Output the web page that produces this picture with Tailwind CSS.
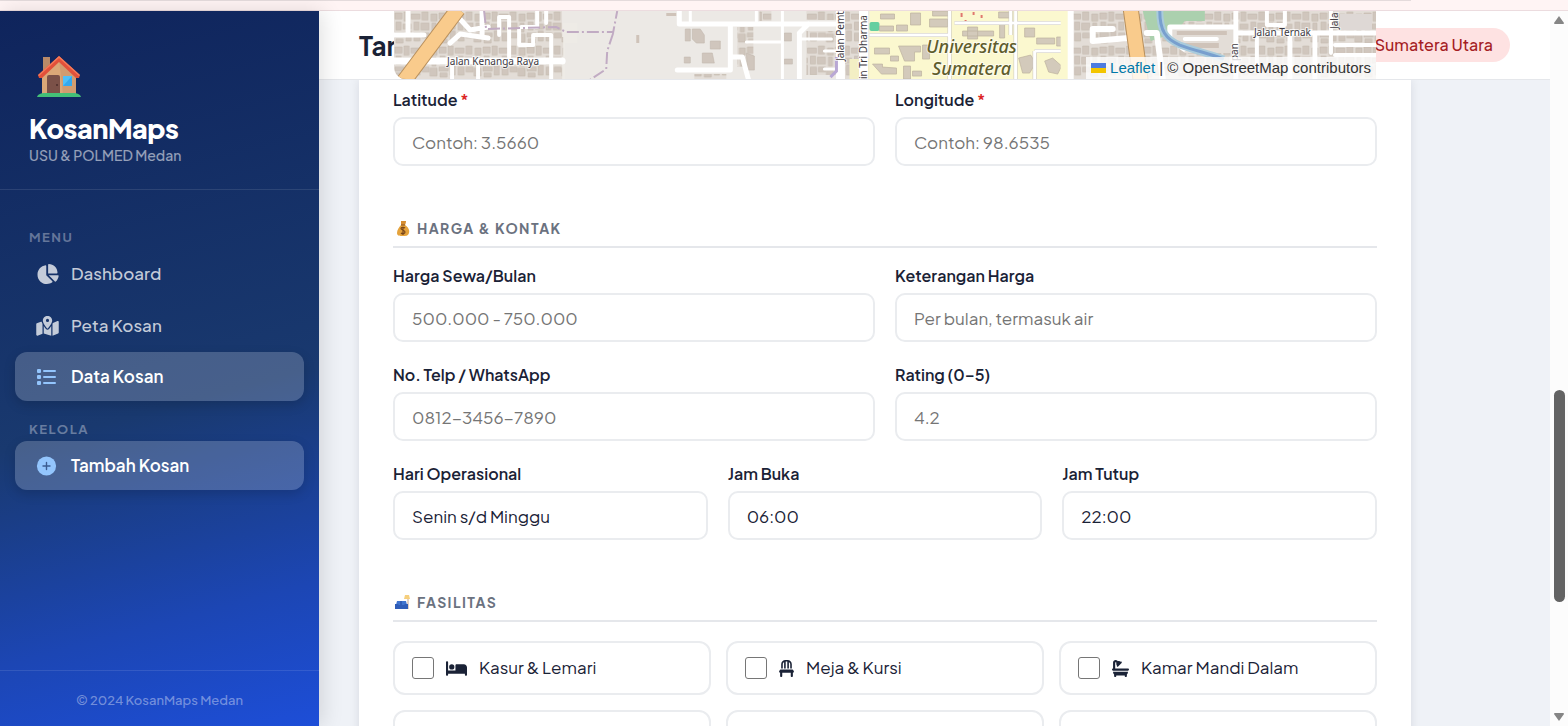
<!DOCTYPE html>
<html lang="id">
<head>
    <meta charset="UTF-8">
    <meta name="viewport" content="width=device-width, initial-scale=1.0">
    <title>KosanMaps - Tambah Kosan</title>
    <script src="https://cdn.jsdelivr.net/npm/@tailwindcss/browser@4"></script>
</head>
<body class="h-screen overflow-hidden flex flex-col bg-[#eff2f7] text-[#1a2236] font-['Plus_Jakarta_Sans',Inter,sans-serif]">
    <!-- Browser edge -->
    <div class="h-[11px] shrink-0 bg-[#fff4f4] border-b border-[#ecdcdf]">
        <div class="h-px w-[90%] bg-[#e4dbdc]"></div>
    </div>

    <div class="flex flex-1 min-h-0">
        <!-- Sidebar -->
        <aside class="relative z-20 w-[319px] shrink-0 flex flex-col text-white bg-[linear-gradient(165deg,#0f245c_0%,#19396f_55%,#1c46b4_82%,#1d4ed8_100%)] shadow-[4px_0_20px_rgba(0,0,0,0.12)]">
            <div class="px-[29px] pt-11 pb-[23px] border-b border-white/10">
                <svg class="ml-2 size-11" viewBox="0 0 44 44" aria-hidden="true">
                    <rect x="6" y="2" width="7" height="18" fill="#b98a68"/>
                    <path d="M5 19 22 4l17 15v21H5z" fill="#dba878"/>
                    <path d="M22 4l17 15v21H26z" fill="#d19c70"/>
                    <path d="M22 1 1 20l1 3h3L22 7l17 16h3l1-3z" fill="#e2503a"/>
                    <path d="M22 1 1 20l1 1L22 3l20 18 1-1z" fill="#f47a58"/>
                    <rect x="10" y="20" width="13" height="20" rx="2" fill="#7b5148"/>
                    <circle cx="20" cy="30" r="1" fill="#4b2d2a"/>
                    <rect x="26" y="21" width="9" height="10" fill="#35a8ee"/>
                    <path d="M26 31V21h9z" fill="#4fc0f8"/>
                    <path d="M0 42c1-3 4-4 8-4h28c4 0 7 1 8 4z" fill="#43c078"/>
                </svg>
                <h1 class="mt-[13px] text-[27px] leading-8 font-extrabold tracking-[-0.5px]">KosanMaps</h1>
                <p class="text-[14px] leading-[22px] font-medium text-white/55">USU &amp; POLMED Medan</p>
            </div>

            <nav class="flex-1 px-[15px] pt-[34px] text-[17px] font-medium">
                <p class="pl-[14px] pt-px leading-6 text-[13px] font-bold tracking-[1.5px] text-white/35">MENU</p>
                <a href="#" class="mb-[3px] h-[49px] px-[21px] flex items-center gap-3 rounded-xl text-white/75">
                    <svg class="w-[23px] h-5" viewBox="0 0 576 512" fill="currentColor"><path d="M304 240V16.6c0-9 7-16.6 16-16.6C443.7 0 544 100.3 544 224c0 9-7.6 16-16.6 16H304zM32 272C32 150.7 122.1 50.3 239 34.3c9.2-1.3 17 6.1 17 15.4V288L412.5 444.5c6.7 6.7 6.2 17.7-1.5 23.1C371.8 495.6 323.8 512 272 512C139.5 512 32 404.6 32 272zm526.4 16c9.3 0 16.6 7.8 15.4 17c-7.7 55.9-34.6 105.6-73.9 142.3c-6 5.6-15.4 5.2-21.2-.7L320 288H558.4z"/></svg>
                    Dashboard
                </a>
                <a href="#" class="mb-[2px] h-[49px] px-[21px] flex items-center gap-3 rounded-xl text-white/75">
                    <svg class="w-[23px] h-5" viewBox="0 0 576 512" fill="currentColor"><path d="M408 120c0 54.6-73.1 151.9-105.2 192c-7.7 9.6-22 9.6-29.6 0C241.1 271.9 168 174.6 168 120C168 53.7 221.7 0 288 0s120 53.7 120 120zm8 80.4c3.5-6.9 6.7-13.8 9.6-20.6c.5-1.2 1-2.5 1.5-3.7l116-46.4C558.9 123.4 576 135 576 152V422.8c0 9.8-6 18.6-15.1 22.3L416 503V200.4zM137.6 138.3c2.4 14.1 7.2 28.3 12.8 41.5c2.9 6.8 6.1 13.7 9.6 20.6V451.8L32.9 502.7C17.1 509 0 497.4 0 480.4V209.6c0-9.8 6-18.6 15.1-22.3l122.6-49zM327.8 332c13.9-17.4 35.7-45.7 56.2-77V504.3L192 449.4V255c20.5 31.3 42.3 59.6 56.2 77c20.5 25.6 59.1 25.6 79.6 0zM288 152a40 40 0 1 0 0-80 40 40 0 1 0 0 80z"/></svg>
                    Peta Kosan
                </a>
                <a href="#" class="h-[49px] px-[21px] flex items-center gap-3 rounded-xl bg-white/20 font-semibold shadow-[0_4px_12px_rgba(0,0,0,0.15)]">
                    <svg class="w-[23px] h-5 text-[#93c5fd]" viewBox="0 0 23 20" fill="currentColor"><rect x="1" y="2" width="4" height="4" rx="1"/><rect x="1" y="8" width="4" height="4" rx="1"/><rect x="1" y="14" width="4" height="4" rx="1"/><rect x="7" y="3" width="13" height="2" rx="1"/><rect x="7" y="9" width="13" height="2" rx="1"/><rect x="7" y="15" width="13" height="2" rx="1"/></svg>
                    Data Kosan
                </a>
                <p class="pl-[14px] pt-4 leading-6 text-[13px] font-bold tracking-[1.5px] text-white/35">KELOLA</p>
                <a href="#" class="h-[49px] px-[21px] flex items-center gap-3 rounded-xl bg-white/20 font-semibold shadow-[0_4px_12px_rgba(0,0,0,0.15)]">
                    <svg class="w-[23px] h-5" viewBox="0 0 23 20"><circle cx="10.500" cy="10" r="9.600" fill="#93c5fd"/><path d="M10.500 6.500v7M7 10h7" stroke="#3b5b90" stroke-width="1.400" stroke-linecap="round"/></svg>
                    Tambah Kosan
                </a>
            </nav>

            <p class="h-14 flex items-center justify-center pt-1 border-t border-white/10 text-[13px] font-medium text-white/40">© 2024 KosanMaps Medan</p>
        </aside>

        <main class="flex-1 min-w-0 overflow-hidden">
            <header class="relative z-[5] h-[69px] px-10 flex items-center justify-between bg-white border-b border-[#e5e7eb]">
                <h2 class="text-[26px] font-bold">Tambah Kosan</h2>
                <span class="h-[34px] px-[17px] flex items-center rounded-full bg-[#fee2e2] text-[16px] font-medium text-[#a51d24]">Medan, Sumatera Utara</span>
            </header>

            <form class="flow-root mx-10 max-w-[1052px] px-[34px] pb-8 bg-white shadow-[0_0_10px_rgba(15,23,42,0.1)]">
                <div class="relative z-10 -mt-[69px] h-[68px] mx-px overflow-hidden rounded-bl-xl bg-[#eeebe6]">
                    <svg class="size-full" viewBox="0 0 981 68" preserveAspectRatio="xMinYMin slice">
                        <defs>
                            <pattern id="houses" width="44" height="34" patternUnits="userSpaceOnUse">
                                <rect width="44" height="34" fill="#e3ddd7"/>
                                <path d="M1 2h7v6H1zM10 1h5v9h-5zM17 3h9v5h-9zM28 1h6v8h-6zM37 3h6v7h-6zM2 11h5v8H2zM9 13h8v5H9zM20 11h5v8h-5zM27 12h8v7h-8zM38 12h4v9h-4zM1 22h9v4H1zM12 20h5v10h-5zM20 22h6v8h-6zM28 22h7v5h-7zM36 23h7v8h-7zM2 28h7v4H2z" fill="#d0c6bd" stroke="#c3b8ae" stroke-width=".6"/>
                            </pattern>
                        </defs>

                        <!-- Kenanga Raya -->
                        <path d="M0 0h168v68H0z" fill="url(#houses)"/>
                        <path d="M96 0h72v12h15v20h-12v36h330V0z" fill="#ece9e5"/>
                        <path d="M94 26h75v20H94zM120 0h25v13h-25zM100 56h50v12h-50zM153 6h11v18h-11z" fill="url(#houses)"/>
                        <g fill="none" stroke="#fff" stroke-linejoin="round" stroke-linecap="round">
                            <path d="M0 50h168" stroke-width="7"/>
                            <path d="M0 24h30M14 0v22M64 6l12 13 18-3M56 32l10-9 28 4M88 0v26" stroke-width="5"/>
                            <path d="M105 24V6h10v40M58 52v16M84 54v14M125 18v16h14V24h18v44M143 0v16h-16M152 0v12" stroke-width="4"/>
                        </g>
                        <path d="M64-2 10 70" stroke="#b88f5c" stroke-width="16" fill="none"/>
                        <path d="M64-2 10 70" stroke="#f9cb8c" stroke-width="14" fill="none"/>
                        <path d="M90 0l2 18 70-2 10 5h47l4-21M219 22l-6 18-1 18-18 12" fill="none" stroke="#c1abc3" stroke-width="2" stroke-dasharray="12 3 2 3"/>
                        <path d="M242 24h3v8h-3zM272 2h10v3h-10z" fill="#cfc3b9"/>

                        <!-- West of Tri Dharma -->
                        <path d="M343 16h16v40h-16zM412 20h30v44h-30zM300 63h32v5h-32zM365 0h12v10h-12zM412 0h43v9h-43z" fill="url(#houses)"/>
                        <path d="M298 18h8l4 6v8h-8l-4-4zM308 42h10l2 10h-12zM291 18h5v12h-5zM316 30h10v8h-10zM290 46h6v6h-6zM390 22h7v8h-7zM390 48h8v5h-8zM352 42l8 3v14h-7z" fill="#d0c6bd" stroke="#c3b8ae" stroke-width=".6"/>
                        <path d="M448 0h24v68h-24z" fill="url(#houses)"/>
                        <path d="M455 48h20v20h-20z" fill="#f3efc4"/>
                        <g fill="none" stroke="#fff" stroke-linejoin="round" stroke-linecap="round">
                            <path d="M285 0v13h158M336 13v33h12l6 22M283 59h53V46M405 22v46M405 22l9-9" stroke-width="5"/>
                            <path d="M388 0v68M352 31h36M405 28h32M362 0v12M430 40h12M430 58h12M296 0v12" stroke-width="3"/>
                            <path d="M446 0v68M469 0v68" stroke-width="9"/>
                        </g>
                        <path d="M442 46v14l-6 6" stroke="#b9a8d4" stroke-width="3" fill="none"/>

                        <!-- Campus -->
                        <path d="M475 0h200v68H475z" fill="#fbf8cf"/>
                        <rect x="475" y="11" width="10" height="9" rx="2" fill="#65cfa0"/>
                        <g fill="#d3cabb" stroke="#bdb19f" stroke-width=".7">
                            <path d="M486 3h14v5h-14zM485 15h14v5h-14zM502 14h11v6h-11zM516 2h10v12h-10zM535 8h18v8h-18zM538 0h16v5h-16z"/>
                            <path d="M480 37h15v6h-15zM504 35h22v6h-6v9h-10zM528 34h7v14h-7zM496 45h8v5h-8zM478 53h10v3l14 1v6h-15zM509 55h7v13h-7zM518 60h9v5h-9z"/>
                            <path d="M568 20h31v5h-31zM573 16h10v12h-10zM604 1h12v6h-12zM605 13h5v14h-5zM630 17h10v9h-10zM642 27h18v6h-18zM662 26h9v9h-9zM624 47l12-3 5 8-6 10h-7zM650 50l8-3 9 8-4 8-9-2z"/>
                        </g>
                        <path d="M567 2v4m4 3v2m8-10v3m8 0v3m-6 4v1" stroke="#e0776f" stroke-width="2"/>
                        <g fill="none" stroke="#c9c4bd" stroke-width="4"><path d="M475 24h80v-24M555 24v44M560 12h110M616 0v24M621 0v68M640 40h35v28M640 40v28"/></g>
                        <g fill="none" stroke="#fff" stroke-width="3"><path d="M475 24h80v-24M555 24v44M560 12h110M616 0v24M621 0v68M640 40h35v28M640 40v28"/></g>

                        <!-- East of campus -->
                        <path d="M675 0h306v68H675z" fill="url(#houses)"/>
                        <path d="M672 4h6v8h-6zM666 0h9v68h-9z" fill="#fbf8cf"/>
                        <path d="M748 0h62v10h-20l-10 12-24 8z" fill="#abd0ae"/>
                        <path d="M776 16h64v26h-50l-14-12z" fill="#e3ddd7"/>
                        <path d="M782 20h50v4h-50zM790 32h34v5h-34z" fill="#cfc3b9"/>
                        <path d="M945 3h32v16h-32z" fill="#ded8d5"/>
                        <g fill="none" stroke="#fff" stroke-linejoin="round" stroke-linecap="round">
                            <path d="M676 0v68M698 18v12l36-3M698 18h20M752 22h10l6 46" stroke-width="6"/>
                            <path d="M775 16h66M841 0v68M775 16v12l14 10M841 22h140M895 24v44M920 24v44" stroke-width="5"/>
                            <path d="M872 0v14h18V0M862 24v36M936 0v42M940 34h41M940 44h41M790 28h32" stroke-width="4"/>
                        </g>
                        <path d="M765 0c0 20 6 28 20 34 16 6 28 8 44 14" fill="none" stroke="#a9cbdc" stroke-width="7"/>
                        <path d="M765 0c0 20 6 28 20 34 16 6 28 8 44 14" fill="none" stroke="#789fce" stroke-width="3"/>
                        <path d="M736-2l10 72" stroke="#b88f5c" stroke-width="16" fill="none"/>
                        <path d="M736-2l10 72" stroke="#f9cb8c" stroke-width="14" fill="none"/>

                        <g font-family="Noto Sans, sans-serif" paint-order="stroke" stroke="#fff" stroke-opacity=".7" stroke-width="2" fill="#3d393f" font-size="10">
                            <text x="53" y="54">Jalan Kenanga Raya</text>
                            <text x="859" y="25">Jalan Ternak</text>
                            <text transform="translate(450 50) rotate(-90)">Jalan Pemt</text>
                            <text transform="translate(473 68) rotate(-90)">in Tri Dharma</text>
                            <text transform="translate(943 18) rotate(-90)">Jala</text>
                            <text transform="translate(843 50) rotate(-90)">pan</text>
                        </g>
                        <g font-family="Noto Sans, sans-serif" paint-order="stroke" stroke="#fff" stroke-opacity=".6" stroke-width="2" fill="#5f5d2c" font-size="18" font-style="italic" font-weight="500" text-anchor="middle">
                            <text x="577" y="42">Universitas</text>
                            <text x="577" y="64">Sumatera</text>
                        </g>
                    </svg>
                    <div class="absolute right-0 bottom-0 h-[22px] px-[5px] flex items-center gap-1 whitespace-nowrap bg-white/80 font-['Liberation_Sans',Arial,sans-serif] text-[15px] text-[#333]">
                        <svg class="w-[15px] h-[10px]" viewBox="0 0 15 10"><path fill="#4c7be1" d="M0 0h15v5H0z"/><path fill="#f3c500" d="M0 5h15v5H0z"/></svg>
                        <span><a href="#" class="text-[#0078a8]">Leaflet</a> | © OpenStreetMap contributors</span>
                    </div>
                </div>

                <div class="grid grid-cols-2 gap-5 pt-2 text-[17px]">
                    <div>
                        <label for="latitude" class="block mb-1 text-[16px] leading-[26px] font-semibold">Latitude <span class="text-[#dc2626]">*</span></label>
                        <input id="latitude" type="text" placeholder="Contoh: 3.5660" class="w-full h-[49px] px-[17px] rounded-[10px] border-2 border-[#eaecef] placeholder:text-[#757575]">
                    </div>
                    <div>
                        <label for="longitude" class="block mb-1 text-[16px] leading-[26px] font-semibold">Longitude <span class="text-[#dc2626]">*</span></label>
                        <input id="longitude" type="text" placeholder="Contoh: 98.6535" class="w-full h-[49px] px-[17px] rounded-[10px] border-2 border-[#eaecef] placeholder:text-[#757575]">
                    </div>
                </div>

                <h3 class="mt-[50px] mb-[15px] pb-1.5 flex items-center gap-1.5 border-b-2 border-[#e5e7eb] text-[14px] leading-6 font-bold tracking-widest text-[#6b7280]">
                    <svg class="ml-0.5 size-4" viewBox="0 0 16 16" aria-hidden="true"><path d="M6 1h5L10 5c3 2 5 5 4 8s-3 3-6 3-6 0-6-3 2-6 4-8z" fill="#e5a33c"/><path d="M6 1h5l-1 4H6z" fill="#d68d31"/><path d="M6 5h4" stroke="#8c5524"/><path d="M10 8c-1-1-4-1-4 .5S10 10 10 12s-3 2-4 1M8 7v8" stroke="#79461b" stroke-width="1.200" fill="none"/></svg>
                    HARGA &amp; KONTAK
                </h3>

                <div class="grid grid-cols-2 gap-5 text-[17px]">
                    <div>
                        <label for="harga" class="block mb-1 text-[16px] leading-[26px] font-semibold">Harga Sewa/Bulan</label>
                        <input id="harga" type="text" placeholder="500.000 - 750.000" class="w-full h-[49px] px-[17px] rounded-[10px] border-2 border-[#eaecef] placeholder:text-[#757575]">
                    </div>
                    <div>
                        <label for="keterangan" class="block mb-1 text-[16px] leading-[26px] font-semibold">Keterangan Harga</label>
                        <input id="keterangan" type="text" placeholder="Per bulan, termasuk air" class="w-full h-[49px] px-[17px] rounded-[10px] border-2 border-[#eaecef] placeholder:text-[#757575]">
                    </div>
                    <div>
                        <label for="telp" class="block mb-1 text-[16px] leading-[26px] font-semibold">No. Telp / WhatsApp</label>
                        <input id="telp" type="text" placeholder="0812-3456-7890" class="w-full h-[49px] px-[17px] rounded-[10px] border-2 border-[#eaecef] placeholder:text-[#757575]">
                    </div>
                    <div>
                        <label for="rating" class="block mb-1 text-[16px] leading-[26px] font-semibold">Rating (0–5)</label>
                        <input id="rating" type="text" placeholder="4.2" class="w-full h-[49px] px-[17px] rounded-[10px] border-2 border-[#eaecef] placeholder:text-[#757575]">
                    </div>
                </div>

                <div class="mt-5 grid grid-cols-3 gap-5 text-[17px]">
                    <div>
                        <label for="hari" class="block mb-1 text-[16px] leading-[26px] font-semibold">Hari Operasional</label>
                        <input id="hari" type="text" value="Senin s/d Minggu" class="w-full h-[49px] px-[17px] rounded-[10px] border-2 border-[#eaecef]">
                    </div>
                    <div>
                        <label for="buka" class="block mb-1 text-[16px] leading-[26px] font-semibold">Jam Buka</label>
                        <input id="buka" type="text" value="06:00" class="w-full h-[49px] px-[17px] rounded-[10px] border-2 border-[#eaecef]">
                    </div>
                    <div>
                        <label for="tutup" class="block mb-1 text-[16px] leading-[26px] font-semibold">Jam Tutup</label>
                        <input id="tutup" type="text" value="22:00" class="w-full h-[49px] px-[17px] rounded-[10px] border-2 border-[#eaecef]">
                    </div>
                </div>

                <h3 class="mt-[50px] mb-[15px] pb-1.5 flex items-center gap-1.5 border-b-2 border-[#e5e7eb] text-[14px] leading-6 font-bold tracking-widest text-[#6b7280]">
                    <svg class="ml-0.5 size-4" viewBox="0 0 16 16" aria-hidden="true"><path d="M13 15V3" stroke="#c9a58a"/><path d="M9 5l1-4h4l1 4z" fill="#f6cf7d"/><path d="M2 7h9l1 4H1z" fill="#3f74cf"/><path d="M0 10h3l1 1h5l1-1h3v5H0z" fill="#2f5db8"/><path d="M6 7v4" stroke="#2449a0"/></svg>
                    FASILITAS
                </h3>

                <div class="pt-1 grid grid-cols-3 auto-rows-[54px] gap-[15px] text-[17px]">
                    <label class="px-[17px] flex items-center gap-3 rounded-xl border-2 border-[#eaecef]">
                        <input type="checkbox" class="size-[22px] appearance-none rounded-[3px] border border-[#767676] bg-white">
                        <svg class="w-[21px] h-[17px]" viewBox="0 0 640 512" fill="currentColor"><path d="M32 32c17.700 0 32 14.300 32 32V320H288V160c0-17.700 14.300-32 32-32H544c53 0 96 43 96 96V448c0 17.700-14.300 32-32 32s-32-14.300-32-32V416H64v32c0 17.700-14.300 32-32 32s-32-14.300-32-32V64C0 46.300 14.300 32 32 32zm144 96a80 80 0 1 1 0 160 80 80 0 1 1 0-160z"/></svg>
                        Kasur &amp; Lemari
                    </label>
                    <label class="px-[17px] flex items-center gap-3 rounded-xl border-2 border-[#eaecef]">
                        <input type="checkbox" class="size-[22px] appearance-none rounded-[3px] border border-[#767676] bg-white">
                        <svg class="w-[15px] h-[17px]" viewBox="0 0 448 512" fill="currentColor"><path d="M248 48V256h48V58.700c23.900 13.800 40 39.700 40 69.300V256h48V128C384 57.300 326.700 0 256 0H192C121.300 0 64 57.300 64 128V256h48V128c0-29.600 16.100-55.500 40-69.300V256h48V48h48zM48 288c-12.100 0-23.200 6.800-28.600 17.700l-16 32c-5 9.900-4.400 21.700 1.400 31.100S20.900 384 32 384l0 96c0 17.700 14.300 32 32 32s32-14.300 32-32V384H352v96c0 17.700 14.300 32 32 32s32-14.300 32-32V384c11.100 0 21.400-5.700 27.200-15.200s6.400-21.200 1.400-31.100l-16-32C423.200 294.800 412.100 288 400 288H48z"/></svg>
                        Meja &amp; Kursi
                    </label>
                    <label class="px-[17px] flex items-center gap-3 rounded-xl border-2 border-[#eaecef]">
                        <input type="checkbox" class="size-[22px] appearance-none rounded-[3px] border border-[#767676] bg-white">
                        <svg class="size-[17px]" viewBox="0 0 512 512" fill="currentColor"><path d="M96 77.300c0-7.300 5.900-13.300 13.300-13.300c3.500 0 6.900 1.400 9.400 3.900l14.900 14.900C130 91.800 128 101.700 128 112c0 19.900 7.200 38 19.200 52c-5.300 9.200-4 21.100 3.800 29c9.400 9.400 24.600 9.400 33.900 0L289 89c9.400-9.400 9.400-24.600 0-33.900c-7.900-7.900-19.800-9.100-29-3.800C246 39.200 227.900 32 208 32c-10.300 0-20.200 2-29.200 5.500L163.900 22.600C149.400 8.100 129.700 0 109.300 0C66.600 0 32 34.600 32 77.300V256c-17.700 0-32 14.300-32 32s14.300 32 32 32H480c17.700 0 32-14.300 32-32s-14.300-32-32-32H96V77.300zM32 352v16c0 28.400 12.400 54 32 71.600V480c0 17.700 14.300 32 32 32s32-14.300 32-32V464H384v16c0 17.700 14.300 32 32 32s32-14.300 32-32V439.600c19.600-17.600 32-43.100 32-71.600V352H32z"/></svg>
                        Kamar Mandi Dalam
                    </label>
                    <div class="rounded-xl border-2 border-[#eaecef]"></div>
                    <div class="rounded-xl border-2 border-[#eaecef]"></div>
                    <div class="rounded-xl border-2 border-[#eaecef]"></div>
                </div>
            </form>
        </main>

        <!-- Scrollbar -->
        <div class="w-[18px] shrink-0 py-1 flex flex-col items-center bg-[#fcfcfc]" aria-hidden="true">
            <svg class="w-3 h-[10px]" viewBox="0 0 12 10"><path d="M6 1l5 7q0 1-1 1H2Q1 9 1 8z" fill="#858585"/></svg>
            <div class="flex-[366]"></div>
            <div class="w-[11px] flex-[212] rounded-full bg-[#636363]"></div>
            <div class="flex-[110]"></div>
            <svg class="w-3 h-[10px]" viewBox="0 0 12 10"><path d="M6 9L1 2q0-1 1-1h8q1 0 1 1z" fill="#858585"/></svg>
        </div>
    </div>
</body>
</html>
